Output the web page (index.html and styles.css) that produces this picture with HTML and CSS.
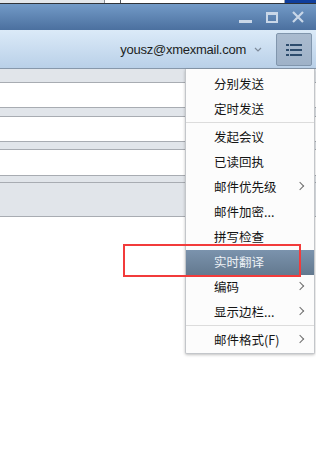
FILE: index.html
```html
<!DOCTYPE html>
<html>
	<head>
		<meta charset="utf-8" />
		<title>Compose</title>
		<link rel="stylesheet" href="styles.css">
	</head>
	<body>
		<div class="window">
			<div class="topstrip">
				<span class="strip-grey"></span>
				<span class="strip-tab"></span>
				<span class="strip-white"></span>
				<span class="strip-blue"></span>
			</div>
			<div class="titlebar">
				<span class="ctl ctl-min"></span>
				<span class="ctl ctl-max"></span>
				<svg class="ctl ctl-close" width="12" height="12" viewBox="0 0 12 12">
					<path d="M1 1 L11 11 M11 1 L1 11" stroke="#c9d7e8" stroke-width="2.2" />
				</svg>
			</div>
			<div class="toolbar">
				<span class="account">yousz@xmexmail.com</span>
				<svg class="account-caret" width="8" height="5" viewBox="0 0 8 5">
					<path d="M1 1 L4 4 L7 1" fill="none" stroke="#7d8a99" stroke-width="1.2" />
				</svg>
				<button class="menu-btn">
					<svg width="16" height="13" viewBox="0 0 16 13">
						<rect x="0" y="1" width="3" height="2" fill="#2d4c6d" />
						<rect x="4" y="1" width="12" height="2" fill="#2d4c6d" />
						<rect x="0" y="6" width="3" height="2" fill="#2d4c6d" />
						<rect x="4" y="6" width="12" height="2" fill="#2d4c6d" />
						<rect x="0" y="11" width="3" height="2" fill="#2d4c6d" />
						<rect x="4" y="11" width="12" height="2" fill="#2d4c6d" />
					</svg>
				</button>
			</div>
			<div class="compose">
				<div class="field field-first"></div>
				<div class="field"></div>
				<div class="field field-tall"></div>
				<div class="compose-bar"></div>
			</div>

			<ul class="menu">
				<li>分别发送</li>
				<li>定时发送</li>
				<li class="sep"></li>
				<li>发起会议</li>
				<li>已读回执</li>
				<li class="sub">邮件优先级</li>
				<li>邮件加密...</li>
				<li>拼写检查</li>
				<li class="active">实时翻译</li>
				<li class="sub">编码</li>
				<li class="sub">显示边栏...</li>
				<li class="sep"></li>
				<li class="sub">邮件格式(F)</li>
			</ul>
			<div class="mark"></div>
		</div>
	</body>
</html>
```

FILE: styles.css
```css
body {
	margin: 0;
	background: #ffffff;
	font-family: 'Liberation Sans', 'Noto Sans CJK SC', sans-serif;
}
.window {
	position: relative;
	width: 316px;
	height: 466px;
	overflow: hidden;
	background: #ffffff;
}
.topstrip {
	display: flex;
	height: 3px;
	border-bottom: 1px solid #2f3338;
}
.strip-grey {
	width: 104px;
	background: #e3e6ea;
	border-right: 1px solid #8a8f96;
}
.strip-tab {
	width: 15px;
	background: #ffffff;
	border-right: 1px solid #50555c;
}
.strip-white {
	flex: 1;
	background: #ffffff;
}
.strip-blue {
	width: 31px;
	background: #0f3d9c;
	border-left: 1px solid #9aa3b0;
}
.titlebar {
	display: flex;
	justify-content: flex-end;
	align-items: center;
	height: 26px;
	padding-right: 12px;
	background: linear-gradient(#729ac7, #4b709f);
}
.ctl {
	display: block;
}
.ctl-min {
	width: 13px;
	height: 3px;
	margin-top: 8px;
	background: #c9d7e8;
}
.ctl-max {
	width: 8px;
	height: 6px;
	margin-left: 14px;
	border: 2px solid #c9d7e8;
	border-top-width: 3px;
}
.ctl-close {
	margin-left: 14px;
}
.toolbar {
	display: flex;
	align-items: center;
	height: 38px;
	padding-right: 4px;
	background: linear-gradient(#dbeaf8, #b9d0e8);
	border-bottom: 1px solid #8798ab;
}
.account {
	margin-left: auto;
	font-size: 13px;
	letter-spacing: -0.25px;
	color: #1b1e22;
}
.account-caret {
	margin-left: 8px;
	margin-right: 14px;
}
.menu-btn {
	display: flex;
	align-items: center;
	justify-content: center;
	width: 36px;
	height: 33px;
	padding: 0;
	background: linear-gradient(#aabbcf, #9fb2c8);
	border: 1px solid #8196ad;
	border-radius: 2px;
}
.compose {
	padding-top: 13px;
	background: #e1e5ea;
}
.field {
	height: 24px;
	margin-top: 8px;
	background: #ffffff;
	border-top: 1px solid #a8acb2;
	border-bottom: 1px solid #a8acb2;
}
.field-first {
	margin-top: 0;
}
.field-tall {
	height: 25px;
	margin-top: 7px;
}
.compose-bar {
	height: 33px;
	margin-top: 6px;
	border-top: 1px solid #a8acb2;
	border-bottom: 1px solid #a8acb2;
}
.menu {
	position: absolute;
	top: 69px;
	left: 185px;
	width: 128px;
	margin: 0;
	padding: 3px 0 0;
	list-style: none;
	background: #fcfcfc;
	border: 1px solid #c3c6ca;
	border-top: none;
	border-radius: 0 0 2px 2px;
	box-shadow: 0 1px 3px rgba(0, 0, 0, 0.25);
	font-family: 'Noto Sans CJK SC', 'Liberation Sans', sans-serif;
	font-size: 12.5px;
	color: #151515;
}
.menu li {
	position: relative;
	height: 25px;
	line-height: 24px;
	padding-left: 28px;
}
.menu li.sep {
	height: 1px;
	margin: 0 0 2px;
	padding: 0;
	background: #dcdcdc;
}
.menu li.sub::after {
	content: '';
	position: absolute;
	right: 11px;
	top: 8px;
	width: 5px;
	height: 5px;
	border-top: 1.3px solid #6f6f6f;
	border-right: 1.3px solid #6f6f6f;
	transform: rotate(45deg);
}
.menu li.active {
	background: linear-gradient(#7b93ad, #63798f);
	color: #eef2f6;
}
.mark {
	position: absolute;
	top: 244px;
	left: 123px;
	width: 174px;
	height: 29px;
	border: 2px solid #f23b3b;
}
```
